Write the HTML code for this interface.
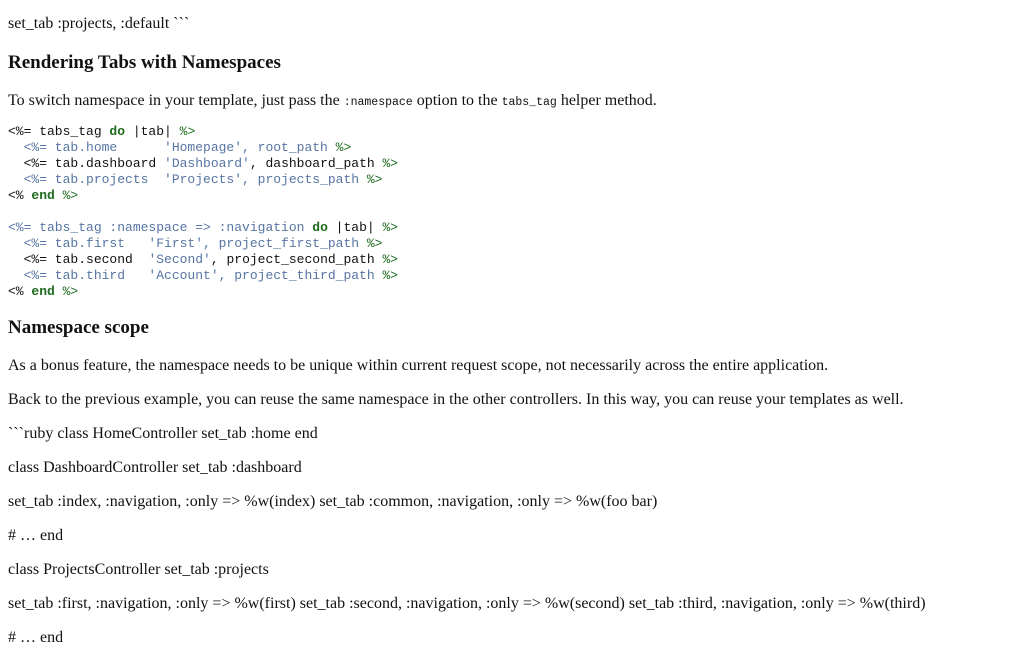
<!DOCTYPE html>
<html><head><meta charset="utf-8"><style>
body{margin:0;background:#fff;width:1024px;height:663px;overflow:hidden;position:relative;font-family:"Liberation Serif",serif;color:#111;}
.t{position:absolute;left:8px;font-size:16px;line-height:18px;white-space:nowrap;}
.h{position:absolute;left:8px;font-size:19px;font-weight:bold;line-height:22px;white-space:nowrap;}
code,.c{font-family:"Liberation Mono",monospace;font-size:11.5px;}
.c{position:absolute;left:8px;line-height:16px;white-space:pre;font-size:13px;color:#111;}
.g{color:#1d6b1d;font-weight:bold}.gg{color:#1d6b1d}
.b{color:#5775a3}
</style></head><body>
<div class="t" style="top:15px">set_tab :projects, :default &#96;&#96;&#96;</div>
<div class="h" style="top:52px">Rendering Tabs with Namespaces</div>
<div class="t" style="top:92px">To switch namespace in your template, just pass the <code>:namespace</code> option to the <code>tabs_tag</code> helper method.</div>
<div class="c" style="top:124px">&lt;%= tabs_tag <span class="g">do</span> |tab| <span class="gg">%&gt;</span>
<span class="b">  &lt;%= tab.home      'Homepage', root_path</span> <span class="gg">%&gt;</span>
  &lt;%= tab.dashboard <span class="b">'Dashboard'</span>, dashboard_path <span class="gg">%&gt;</span>
<span class="b">  &lt;%= tab.projects  'Projects', projects_path</span> <span class="gg">%&gt;</span>
&lt;% <span class="g">end</span> <span class="gg">%&gt;</span>

<span class="b">&lt;%= tabs_tag :namespace =&gt; :navigation</span> <span class="g">do</span> |tab| <span class="gg">%&gt;</span>
<span class="b">  &lt;%= tab.first   'First', project_first_path</span> <span class="gg">%&gt;</span>
  &lt;%= tab.second  <span class="b">'Second'</span>, project_second_path <span class="gg">%&gt;</span>
<span class="b">  &lt;%= tab.third   'Account', project_third_path</span> <span class="gg">%&gt;</span>
&lt;% <span class="g">end</span> <span class="gg">%&gt;</span></div>
<div class="h" style="top:317px">Namespace scope</div>
<div class="t" style="top:357px">As a bonus feature, the namespace needs to be unique within current request scope, not necessarily across the entire application.</div>
<div class="t" style="top:391px">Back to the previous example, you can reuse the same namespace in the other controllers. In this way, you can reuse your templates as well.</div>
<div class="t" style="top:425px">&#96;&#96;&#96;ruby class HomeController set_tab :home end</div>
<div class="t" style="top:459px">class DashboardController set_tab :dashboard</div>
<div class="t" style="top:493px">set_tab :index, :navigation, :only =&gt; %w(index) set_tab :common, :navigation, :only =&gt; %w(foo bar)</div>
<div class="t" style="top:527px"># … end</div>
<div class="t" style="top:561px">class ProjectsController set_tab :projects</div>
<div class="t" style="top:595px">set_tab :first, :navigation, :only =&gt; %w(first) set_tab :second, :navigation, :only =&gt; %w(second) set_tab :third, :navigation, :only =&gt; %w(third)</div>
<div class="t" style="top:629px"># … end</div>
</body></html>
